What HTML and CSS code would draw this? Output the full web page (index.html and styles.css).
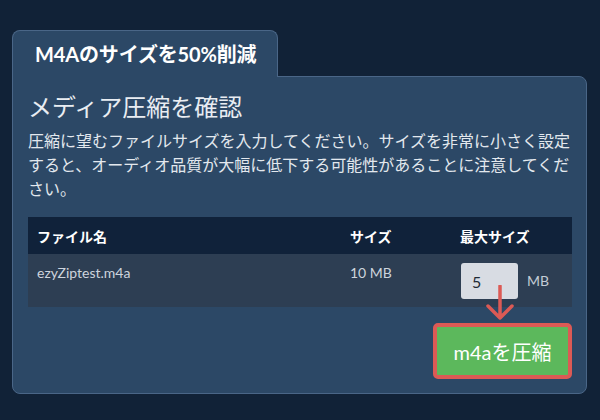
FILE: index.html
```html
<!DOCTYPE html>
<html lang="ja">
<head>
<meta charset="utf-8">
<title>M4Aのサイズを50%削減</title>
<link rel="stylesheet" href="styles.css">
</head>
<body>
<div class="wrap">
  <div class="tab">M4Aのサイズを50%削減</div>
  <div class="panel">
    <h1 class="title">メディア圧縮を確認</h1>
    <p class="desc">圧縮に望むファイルサイズを入力してください。サイズを非常に小さく設定すると、オーディオ品質が大幅に低下する可能性があることに注意してください。</p>
    <table class="files">
      <colgroup>
        <col class="c1"><col class="c2"><col class="c3">
      </colgroup>
      <thead>
        <tr><th>ファイル名</th><th>サイズ</th><th>最大サイズ</th></tr>
      </thead>
      <tbody>
        <tr>
          <td>ezyZiptest.m4a</td>
          <td>10 MB</td>
          <td class="maxcell">
            <div class="maxwrap">
              <div class="inputbox">
                <input class="sizein" type="text" value="5">
                <svg class="arrow" width="32" height="40" viewBox="0 0 32 40">
                  <path d="M15 1 L15 33 M3 21 L15 33 L27 21" fill="none" stroke="#dc5a55" stroke-width="3.5" stroke-linecap="round" stroke-linejoin="round"/>
                </svg>
              </div>
              <span class="unit">MB</span>
            </div>
          </td>
        </tr>
      </tbody>
    </table>
    <div class="actions">
      <button class="compress">m4aを圧縮</button>
    </div>
  </div>
</div>
</body>
</html>
```

FILE: styles.css
```css
html, body {
  margin: 0;
  padding: 0;
}
body {
  background: #112237;
  font-family: "Lato", "Noto Sans CJK JP", sans-serif;
  color: #e6ebf0;
  width: 600px;
  height: 420px;
  overflow: hidden;
}
.wrap {
  padding: 30px 13px 0 12px;
}
.tab {
  display: inline-block;
  position: relative;
  z-index: 1;
  box-sizing: border-box;
  height: 47px;
  margin-bottom: -1px;
  padding: 0 21px 0 22px;
  background: #2c4866;
  border: 1px solid #4a6687;
  border-bottom: none;
  border-radius: 8px 8px 0 0;
  color: #ffffff;
  font-weight: 700;
  font-size: 20px;
  letter-spacing: -0.15px;
  line-height: 46px;
}
.panel {
  background: #2c4866;
  border: 1px solid #4a6687;
  border-radius: 0 8px 8px 8px;
  padding: 15px 14px 14px 15px;
}
.title {
  margin: 0 0 7px;
  font-size: 24px;
  font-weight: 400;
  line-height: 30px;
  color: #e9edf2;
}
.desc {
  margin: 0 -4px 16px 0;
  font-size: 16px;
  line-height: 24px;
  color: #e3e8ee;
}
.files {
  width: 544px;
  border-collapse: collapse;
  table-layout: fixed;
}
.c1 { width: 313px; }
.c2 { width: 110px; }
.c3 { width: 121px; }
.files th {
  background: #10223a;
  color: #ffffff;
  font-weight: 700;
  font-size: 14px;
  text-align: left;
  height: 37px;
  padding: 0 9px;
  box-sizing: border-box;
}
.files td {
  background: #2d3e53;
  color: #cdd4dd;
  font-size: 14px;
  line-height: 20px;
  padding: 9px 9px 8px;
  vertical-align: top;
}
.files td.maxcell {
  padding: 9px 9px 8px 10px;
}
.maxwrap {
  display: flex;
  align-items: center;
}
.inputbox {
  position: relative;
  width: 57px;
  height: 36px;
  margin-right: 9px;
}
.sizein {
  box-sizing: border-box;
  width: 57px;
  height: 36px;
  border: none;
  border-radius: 3px;
  background: #d8dce3;
  padding: 0 11px;
  font-family: "Lato", sans-serif;
  font-size: 16px;
  color: #1f2a36;
  outline: none;
}
.arrow {
  position: absolute;
  left: 24px;
  top: 22px;
}
.unit {
  font-size: 14px;
  color: #c4ccd6;
}
.actions {
  display: flex;
  justify-content: flex-end;
  margin-top: 16px;
}
.compress {
  box-sizing: border-box;
  width: 139px;
  height: 56px;
  border: 4px solid #dc5a55;
  border-radius: 5px;
  background: #5cb85c;
  color: #ffffff;
  font-family: "Lato", "Noto Sans CJK JP", sans-serif;
  font-size: 20px;
  font-weight: 400;
  padding: 0;
}
```
